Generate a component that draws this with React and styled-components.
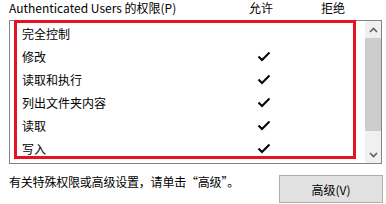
import React from 'react';
import styled, { createGlobalStyle } from 'styled-components';

const GlobalStyle = createGlobalStyle`
  body {
    margin: 0;
    background: #ffffff;
    font-family: "Noto Sans CJK SC", "Noto Sans", sans-serif;
    font-size: 12px;
    color: #000;
  }
`;

const rows = [
  { name: '完全控制', allow: false },
  { name: '修改', allow: true },
  { name: '读取和执行', allow: true },
  { name: '列出文件夹内容', allow: true },
  { name: '读取', allow: true },
  { name: '写入', allow: true },
];

const Check = () => (
  <svg width='14' height='11' viewBox='0 0 14 11'>
    <path d='M1.5 5.5 L5 9 L12.5 1.5' fill='none' stroke='#000' strokeWidth='2' />
  </svg>
);

const Chevron = ({ down }) => (
  <svg width='9' height='6' viewBox='0 0 9 6'>
    <path
      d={down ? 'M1 1 L4.5 4.5 L8 1' : 'M1 5 L4.5 1.5 L8 5'}
      fill='none'
      stroke='#606060'
      strokeWidth='1.6'
    />
  </svg>
);

const App = () => {
  return (
    <Wrapper>
      <GlobalStyle />
      <Header>
        <span>Authenticated Users 的权限(P)</span>
        <ColHead>允许</ColHead>
        <ColHead>拒绝</ColHead>
      </Header>
      <ListBox>
        <List>
          {rows.map((r) => (
            <Row key={r.name}>
              <span>{r.name}</span>
              <Cell>{r.allow && <Check />}</Cell>
              <Cell />
            </Row>
          ))}
        </List>
        <ScrollBar>
          <Arrow>
            <Chevron />
          </Arrow>
          <Track>
            <Thumb />
          </Track>
          <Arrow>
            <Chevron down />
          </Arrow>
        </ScrollBar>
        <Highlight />
      </ListBox>
      <Footer>
        <Note>有关特殊权限或高级设置，请单击“高级”。</Note>
        <Button>高级(V)</Button>
      </Footer>
    </Wrapper>
  );
};

export default App;

const Wrapper = styled.div`
  width: 373px;
  padding-left: 9px;
`;

const Header = styled.div`
  display: grid;
  grid-template-columns: 202px 44px 44px;
  column-gap: 28px;
  height: 20px;
  line-height: 15px;
  white-space: nowrap;
`;

const ColHead = styled.span`
  text-align: center;
`;

const ListBox = styled.div`
  position: relative;
  display: flex;
  height: 142px;
  border: 1px solid #828282;
`;

const List = styled.div`
  flex: 1;
  padding-top: 1px;
`;

const Row = styled.div`
  display: grid;
  grid-template-columns: 195px 44px 44px;
  column-gap: 25px;
  align-items: center;
  height: 23px;
  padding-left: 12px;
`;

const Cell = styled.div`
  display: flex;
  justify-content: center;
`;

const ScrollBar = styled.div`
  width: 16px;
  display: flex;
  flex-direction: column;
  background: #f0f0f0;
`;

const Arrow = styled.div`
  height: 17px;
  display: flex;
  align-items: center;
  justify-content: center;
`;

const Track = styled.div`
  flex: 1;
`;

const Thumb = styled.div`
  height: 93px;
  background: #cdcdcd;
`;

const Highlight = styled.div`
  position: absolute;
  left: 4px;
  top: -1px;
  width: 336px;
  height: 133px;
  border: 3px solid #e81123;
  pointer-events: none;
`;

const Footer = styled.div`
  display: flex;
  justify-content: space-between;
  align-items: flex-start;
  margin-top: 11px;
`;

const Note = styled.span`
  line-height: 14px;
  letter-spacing: -0.2px;
`;

const Button = styled.button`
  width: 104px;
  height: 28px;
  margin-right: -1px;
  background: #e1e1e1;
  border: 1px solid #adadad;
  font-family: inherit;
  font-size: 12px;
  color: #000;
  padding: 0;
`;
